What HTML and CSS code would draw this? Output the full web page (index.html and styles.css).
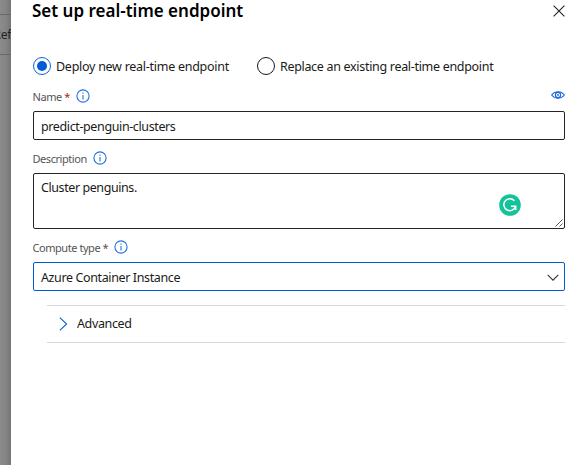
FILE: index.html
```html
<!DOCTYPE html>
<html lang="en">
<head>
<meta charset="utf-8">
<title>Set up real-time endpoint</title>
<link rel="stylesheet" href="styles.css">
</head>
<body>
<div class="app">
  <aside class="backdrop">
    <div class="toolbar"><span>Ref</span></div>
  </aside>
  <main class="panel">
    <header class="head">
      <h1>Set up real-time endpoint</h1>
      <svg class="close" width="12" height="12" viewBox="0 0 12 12"><path d="M.6.6l10.8 10.8M11.4.6L.6 11.4" fill="none" stroke="#222" stroke-width="1.1"/></svg>
    </header>
    <div class="radios">
      <div class="radio checked"><i class="dot"></i><span>Deploy new real-time endpoint</span></div>
      <div class="radio"><i class="dot"></i><span class="replace">Replace an existing real-time endpoint</span></div>
    </div>
    <div class="label name">
      <span>Name <b>*</b></span>
      <svg class="info" width="14" height="14" viewBox="0 0 14 14"><circle cx="7" cy="7" r="6.100"/><path d="M7 6v4.400M7 3.600v1.200"/></svg>
      <svg class="eye" width="14" height="8" viewBox="0 0 14 8"><path d="M.6 4C2.500 1.700 4.600.800 7 .800S11.500 1.700 13.400 4C11.500 6.300 9.400 7.200 7 7.200S2.500 6.300.600 4z"/><circle cx="7" cy="4" r="2.600"/><circle class="pupil" cx="7" cy="4" r=".9"/></svg>
    </div>
    <div class="field"><span>predict-penguin-clusters</span></div>
    <div class="label description">
      <span>Description</span>
      <svg class="info" width="14" height="14" viewBox="0 0 14 14"><circle cx="7" cy="7" r="6.100"/><path d="M7 6v4.400M7 3.600v1.200"/></svg>
    </div>
    <div class="field area">
      <span>Cluster penguins.</span>
      <svg class="badge" width="22" height="22" viewBox="0 0 22 22"><circle cx="11" cy="11" r="10.800" fill="#15c39a"/><path d="M15.400 6.800A6 6 0 1 0 16.600 12.300M12 12.200H16.700V16" fill="none" stroke="#fff" stroke-width="1.500"/></svg>
      <svg class="grip" width="8" height="8" viewBox="0 0 8 8"><path d="M.5 7.500l7-7M4.500 7.500l3-3" fill="none" stroke="#444" stroke-width=".9"/></svg>
    </div>
    <div class="label compute">
      <span>Compute type <b>*</b></span>
      <svg class="info" width="14" height="14" viewBox="0 0 14 14"><circle cx="7" cy="7" r="6.100"/><path d="M7 6v4.400M7 3.600v1.200"/></svg>
    </div>
    <div class="field select">
      <span>Azure Container Instance</span>
      <svg class="down" width="12" height="7" viewBox="0 0 12 7"><path d="M.7.800L6 6.100 11.300.800" fill="none" stroke="#333" stroke-width="1.100"/></svg>
    </div>
    <section class="advanced">
      <svg width="9" height="14" viewBox="0 0 9 14"><path d="M.8.600L7.600 7 .8 13.400" fill="none" stroke="#0d61da" stroke-width="1.100"/></svg>
      <span>Advanced</span>
    </section>
  </main>
</div>
</body>
</html>
```
FILE: styles.css
```css
* { box-sizing: border-box; }
body { margin: 0; background: #fff; font: 12.5px/18px "Noto Sans", sans-serif; letter-spacing: -.27px; color: #1b1a19; overflow: hidden; }
svg { display: block; flex: none; }
span { white-space: nowrap; }
.app { display: flex; width: 587px; height: 465px; }
.backdrop { width: 11px; flex: none; overflow: hidden; padding-top: 14px; background: linear-gradient(90deg, #8b8b8b, #858585 50%, #747474); }
.toolbar { display: flex; justify-content: flex-end; align-items: center; height: 41px; border: solid #686868; border-width: 1px 0; color: #202020; font-size: 12px; }
.panel { flex: 1; padding: 0 22px; background: #fff; }
.head { display: flex; justify-content: space-between; height: 57px; }
h1 { margin: -1px 0 0 -1px; font-size: 17px; line-height: 24px; font-weight: 600; letter-spacing: 0; color: #000; }
.close { margin-top: 5px; }
.radios { display: flex; gap: 28px; height: 18px; }
.radio { display: flex; align-items: center; gap: 5px; padding-top: 1px; }
.replace { letter-spacing: -.31px; }
.dot { display: flex; align-items: center; justify-content: center; width: 18px; height: 18px; margin-top: -1px; border: 1px solid #1b1a19; border-radius: 50%; }
.checked .dot { border-color: #0d61da; }
.checked .dot::after { content: ""; width: 10px; height: 10px; border-radius: 50%; background: #015cda; }
.label { display: flex; align-items: center; font-size: 11px; letter-spacing: -.45px; color: #555; height: 36px; padding-top: 8px; }
.label span { margin-left: -.5px; }
.label b { font-weight: 400; color: #a4262c; }
.compute { height: 33px; padding-top: 5px; }
.compute b { color: #66494b; }
.description { height: 33px; padding-top: 5px; }
.info { margin: -3px 0 0 6px; fill: none; stroke: #2372df; stroke-width: 1.1; }
.eye { margin: -5px 0 0 auto; fill: none; stroke: #1768dc; stroke-width: 1.1; }
.pupil { fill: #1768dc; stroke: none; }
.field { position: relative; display: flex; align-items: center; height: 29px; padding: 2px 7px 0; border: 1px solid #252423; border-radius: 2px; letter-spacing: -.38px; }
.area { align-items: flex-start; height: 56px; padding-top: 5px; letter-spacing: -.42px; }
.badge { position: absolute; top: 20px; right: 43px; }
.grip { position: absolute; right: 1px; bottom: 1px; }
.select { justify-content: space-between; border-color: #015cda; padding-right: 5px; }
.advanced { display: flex; align-items: center; gap: 9px; height: 38px; margin: 14px 0 0 14px; padding: 0 0 1px 12px; letter-spacing: -.37px; border: solid #d8d8d8; border-width: 1px 0; }
```
